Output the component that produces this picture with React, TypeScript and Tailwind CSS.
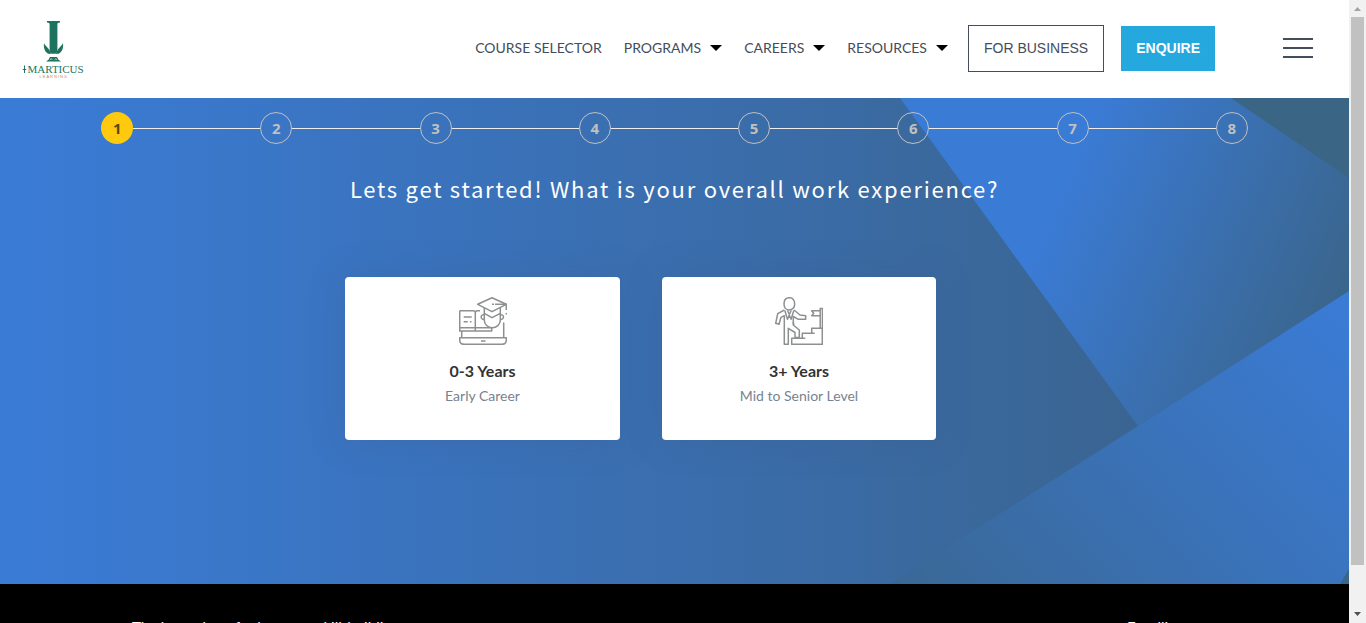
import type { ReactNode } from 'react';

const steps = [1, 2, 3, 4, 5, 6, 7, 8];

function Logo() {
  return (
    <a href="#home" aria-label="Imarticus Learning" className="mt-[3px] block">
      <svg viewBox="0 0 66 62" className="h-[62px] w-[66px]">
        <g fill="#1d735e">
          <path d="M27 1h13v1.400c-2 .2-2.600.6-2.600 1.800v26c0 1.700-.8 3.200-2 3.600h-3.800c-1.200-.4-2-1.900-2-3.600v-26c0-1.200-.6-1.600-2.600-1.800z" />
          <path d="M24 23c.6 2.500 5.500 5 7 11l-2.600-.3c-3.600-1.700-5-5.700-4.400-10.700zM43 23c-.6 2.500-5.500 5-7 11l2.600-.3c3.600-1.700 5-5.700 4.400-10.700z" />
          <path d="M30 37h7l1.500 2.800 2.500 1.700H26l2.500-1.700z" />
        </g>
        <path d="m30 40 1.200-1.500 1.200 1.500m2.200 0 1.200-1.500 1.200 1.500" stroke="#fff" strokeWidth=".6" fill="none" />
        <path d="M4.500 45.500v7.500M2.800 49.500h3.400" stroke="#1d735e" strokeWidth="1" />
        <text x="7.500" y="52.500" fontSize="11" fill="#1d735e" fontFamily="Liberation Serif, serif">MARTICUS</text>
        <text x="19.500" y="58" fontSize="4" letterSpacing="1" fill="#e0804a" fontFamily="Liberation Sans, sans-serif">LEARNING</text>
      </svg>
    </a>
  );
}

function NavMenu({ label }: { label: string }) {
  return (
    <button type="button" className="flex items-center gap-[9px]">
      {label}
      <svg viewBox="0 0 12 6" className="h-[6px] w-3" aria-hidden="true">
        <path d="M0 0h12L6 6z" fill="#000" />
      </svg>
    </button>
  );
}

function Header() {
  return (
    <header className="flex h-[98px] shrink-0 items-center bg-white pr-9 pl-5">
      <Logo />
      <nav className="ml-auto flex items-center pb-[2px] text-sm text-[#434d5b]">
        <div className="flex items-center gap-[22px]">
          <a href="#course-selector">COURSE SELECTOR</a>
          <NavMenu label="PROGRAMS" />
          <NavMenu label="CAREERS" />
          <NavMenu label="RESOURCES" />
        </div>
        <a
          href="#business"
          className="ml-5 flex h-[47px] items-center border border-[#434d5b] px-[15px] font-['Liberation_Sans',sans-serif]"
        >
          FOR BUSINESS
        </a>
        <button
          type="button"
          className="ml-[17px] h-[45px] bg-[#25a8dd] px-[15px] font-['Liberation_Sans',sans-serif] font-bold text-white"
        >
          ENQUIRE
        </button>
        <button type="button" aria-label="Open menu" className="ml-[68px] flex flex-col gap-[7px]">
          <span className="h-[2px] w-[30px] bg-[#434d5b]" />
          <span className="h-[2px] w-[30px] bg-[#434d5b]" />
          <span className="h-[2px] w-[30px] bg-[#434d5b]" />
        </button>
      </nav>
    </header>
  );
}

function Backdrop() {
  return (
    <svg
      viewBox="0 0 1349 486"
      preserveAspectRatio="none"
      className="absolute inset-0 h-full w-full"
      aria-hidden="true"
    >
      <defs>
        <linearGradient id="base" gradientUnits="userSpaceOnUse" x1="30" y1="0" x2="1330" y2="0">
          <stop stopColor="#3a7bd5" />
          <stop offset="1" stopColor="#3a6186" />
        </linearGradient>
        <linearGradient id="upper" gradientUnits="userSpaceOnUse" x1="1065" y1="80" x2="1360" y2="205">
          <stop stopColor="#3a7bd5" />
          <stop offset="1" stopColor="#3a6488" />
        </linearGradient>
        <linearGradient id="lower" gradientUnits="userSpaceOnUse" x1="1349" y1="220" x2="880" y2="640">
          <stop stopColor="#3a7bd5" />
          <stop offset="1" stopColor="#3a6488" />
        </linearGradient>
      </defs>
      <path d="M0 0h1349v486H0z" fill="url(#base)" />
      <path d="M1231 0h118v80z" fill="#3a6585" />
      <path d="M900 0h331l118 80v113l-211 135z" fill="url(#upper)" />
      <path d="M1349 193 1138 328 890 486h459z" fill="url(#lower)" />
      <path d="M1349 471v15h-9z" fill="#3a6585" />
    </svg>
  );
}

function Stepper() {
  return (
    <ol className="mx-auto flex w-[85%] items-center font-['Noto_Sans','Open_Sans',sans-serif] text-[15px] leading-none font-bold">
      {steps.map((n) => (
        <li key={n} className={n === 1 ? 'flex items-center' : 'flex flex-1 items-center'}>
          {n > 1 && <span className="h-px flex-1 bg-[#eeeeee]" />}
          <span
            className={
              n === 1
                ? 'flex size-8 items-center justify-center rounded-full bg-[#ffc90e] text-[#5b4a10]'
                : 'flex size-8 items-center justify-center rounded-full border border-[#c0c0c0] text-[#c0c0c0]'
            }
          >
            {n}
          </span>
        </li>
      ))}
    </ol>
  );
}

function GraduateIcon() {
  return (
    <svg viewBox="0 0 48 48" className="size-12" fill="none" stroke="#8d8f90" strokeWidth="1.500" strokeLinejoin="round" aria-hidden="true">
      <path d="M16.300 14.500V34M.7 13.700h13.300q2.300 0 2.300 2 0-2 2.300-2H21M.7 13.700V34h32v-3.300H.7M16.300 30.700h11.400" />
      <path d="M4.700 20h8M4.700 24.700h4M11 24.700h1.500" />
      <path d="M33 .7 18.700 7.300 33 14.700l14.300-7.400z" />
      <path d="M25.300 11v12.300c0 4.200 3.500 7.400 7.900 7.400s8.100-3.200 8.100-7.400V11M25.300 16.300l7.700 4.400 8.300-4.400" />
      <path d="M25.300 17.700c-4.200-.6-4.200 5 0 4.700M41.300 17.700c4.200-.6 4.200 5 0 4.700" />
      <path d="M33 7.300h2M36 7.300h11.300V13M47.300 16v1.500" />
      <path d="M2.700 34v6.700M44.700 25.500v15.200M.7 40.700h46.600v2c0 3-1.800 4.600-4.600 4.600H5.300C2.500 47.300.7 45.700.7 42.700zM22 44h4.500" />
    </svg>
  );
}

function ClimberIcon() {
  return (
    <svg viewBox="0 0 48 48" className="size-12" fill="none" stroke="#8d8f90" strokeWidth="1.500" strokeLinejoin="round" aria-hidden="true">
      <path d="M9 7c0-4 2.300-6.300 5.300-6.300S19.700 3 19.700 7c0 3.500-2.400 6-5.400 6S9 10.500 9 7z" />
      <path d="M9.500 13 2.700 16.700.7 26.300l3.300 1 2-7 3.300-1.600v28.600h4V31.300L20 35.500v5h4.300V33l-6-5v-8.500l5 2.800h7.400v-3.600L25 18l-6-5" />
      <path d="m9.800 13.500 2.700 8.800 1.800-4 1.800 4 2.700-8.800M12.500 13.500l1.800 4 1.900-4M18.700 28l-.4-3" />
      <path d="M16.700 47.300h30.600v-16H36.700v5h-9.400v5H16.700zM27.300 41.300h3M36.700 36.300h3" />
      <path d="M45.200 31V11.500h2.200V31M45.200 13.700h-8.500l2 2.500-2 2.500h8.500" />
    </svg>
  );
}

function ExperienceCard({ icon, title, note }: { icon: ReactNode; title: string; note: string }) {
  return (
    <button
      type="button"
      className="flex h-[163px] flex-col items-center rounded bg-white pt-5 shadow-[0_0_35px_rgba(60,90,140,0.3)]"
    >
      {icon}
      <span className="mt-[14px] text-base leading-6 font-bold text-[#333333]">{title}</span>
      <span className="text-sm leading-[26px] text-[#77838f]">{note}</span>
    </button>
  );
}

function Scrollbar() {
  return (
    <div className="flex w-[17px] shrink-0 flex-col items-center bg-[#f1f1f1]" aria-hidden="true">
      <svg viewBox="0 0 17 17" className="size-[17px] shrink-0">
        <path d="M5 11h7L8.500 7z" fill="#a3a3a3" />
      </svg>
      <div className="w-[13px] flex-[548] bg-[#c1c1c1]" />
      <div className="flex-[41]" />
      <svg viewBox="0 0 17 17" className="size-[17px] shrink-0">
        <path d="M5 6h7l-3.500 4z" fill="#505050" />
      </svg>
    </div>
  );
}

export default function App() {
  return (
    <div className="flex h-screen overflow-hidden font-['Lato',sans-serif]">
      <div className="flex min-w-0 flex-1 flex-col overflow-hidden">
        <Header />
        <main className="relative h-[486px] shrink-0">
          <Backdrop />
          <div className="relative pt-[14px]">
            <Stepper />
            <h1 className="mt-[26px] text-center font-['Noto_Sans_CJK_SC',sans-serif] text-[22px] leading-9 tracking-[0.08em] text-white">
              Lets get started! What is your overall work experience?
            </h1>
            <div className="mx-auto mt-[71px] grid max-w-[659px] grid-cols-[275px_274px] gap-[42px]">
              <ExperienceCard icon={<GraduateIcon />} title="0-3 Years" note="Early Career" />
              <ExperienceCard icon={<ClimberIcon />} title="3+ Years" note="Mid to Senior Level" />
            </div>
          </div>
        </main>
        <footer className="flex shrink-0 justify-between bg-black px-[132px] pt-[34px] pb-10 text-[15px] leading-[18px] text-white">
          <p>The know-how for learners, skill-building</p>
          <p className="w-[90px]">Enrolling</p>
        </footer>
      </div>
      <Scrollbar />
    </div>
  );
}
